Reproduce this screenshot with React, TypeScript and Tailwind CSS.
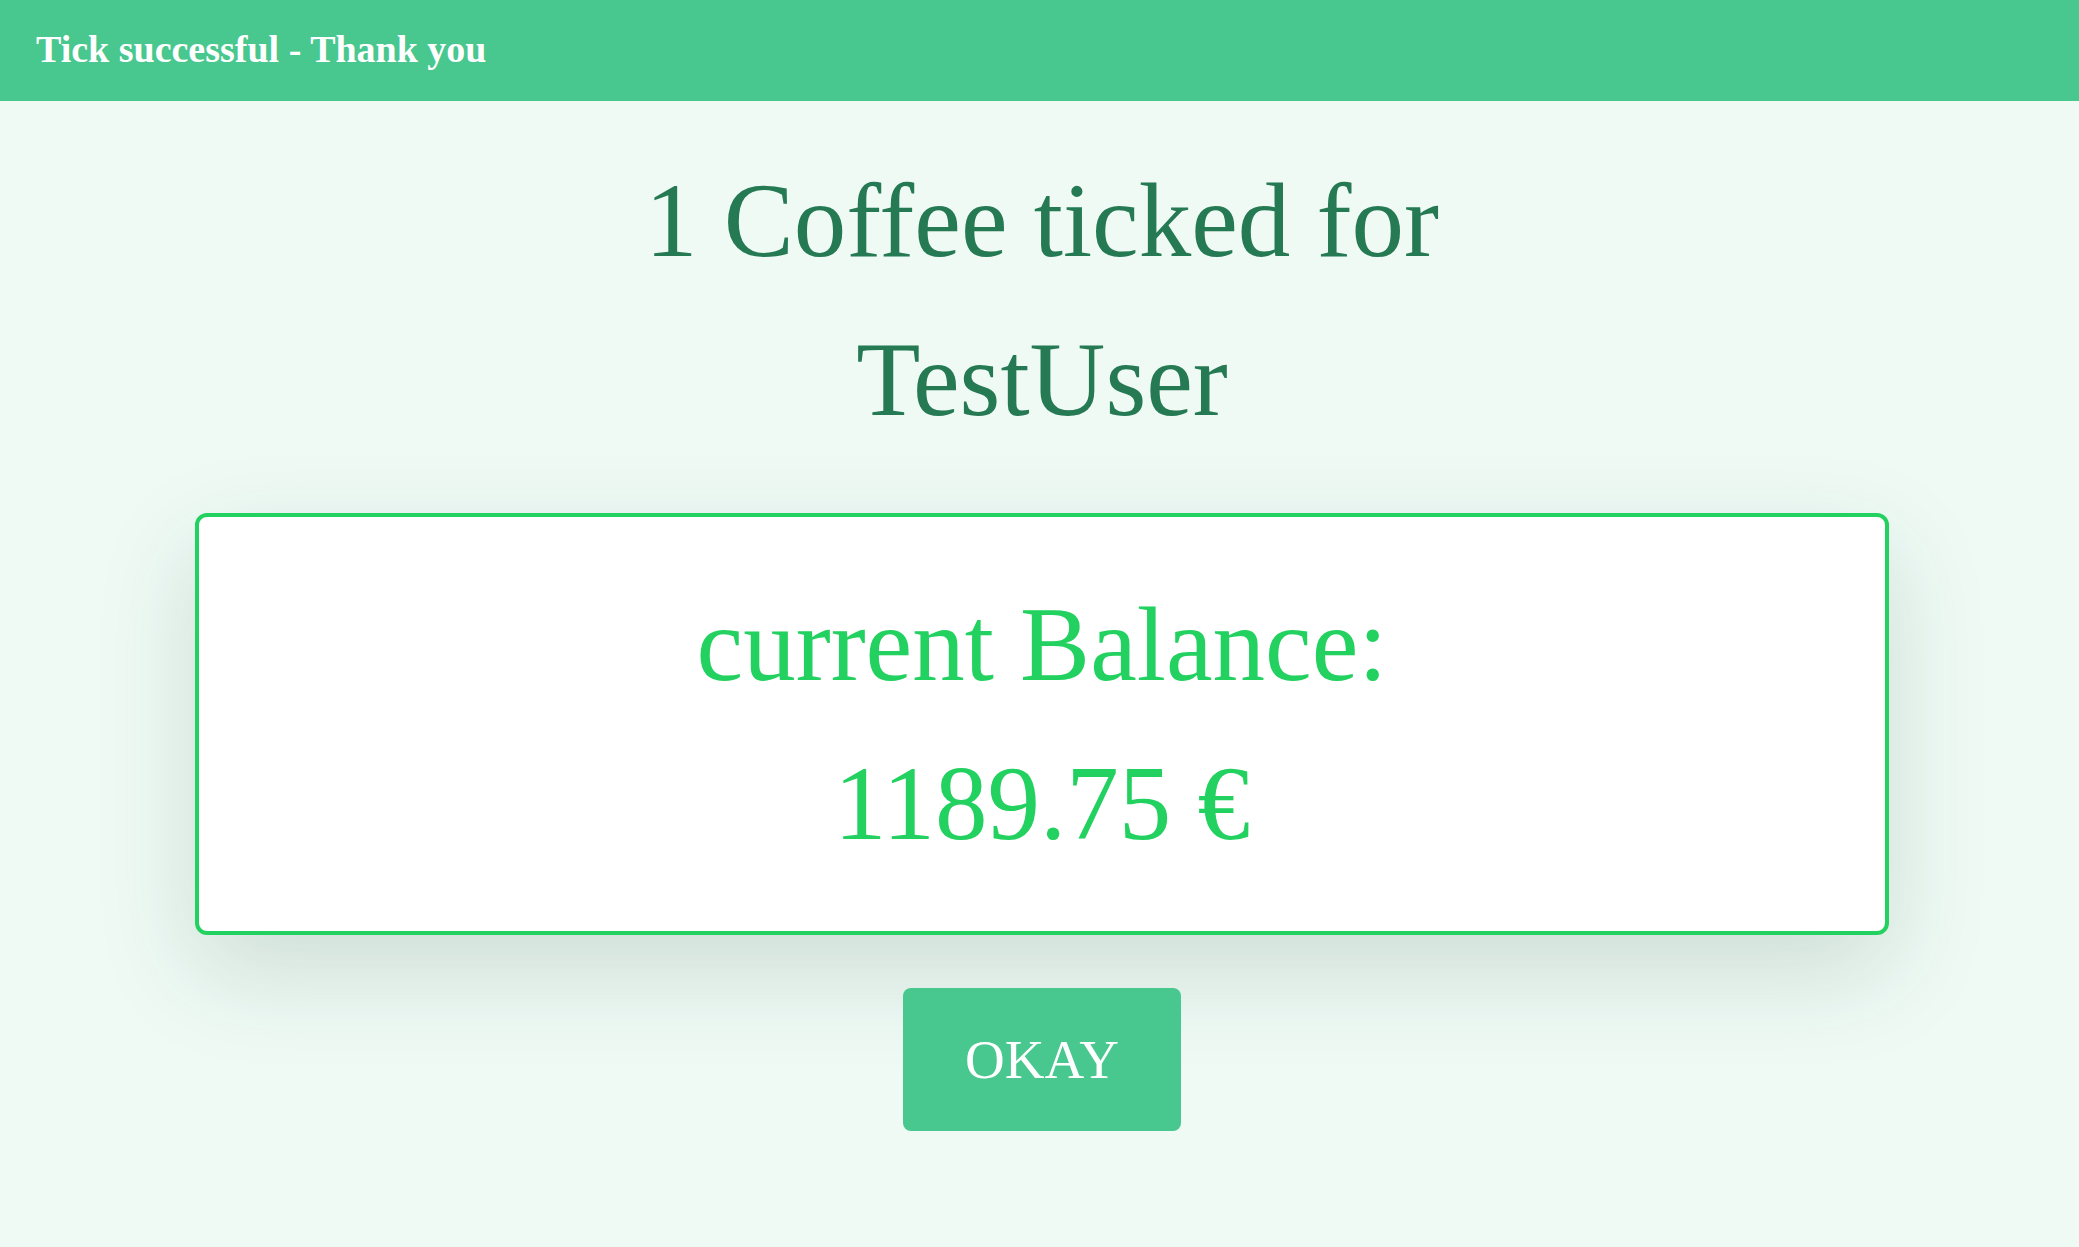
export default function App() {
  return (
    <div className="min-h-screen bg-[#effaf5] font-['Liberation_Serif','Times_New_Roman',serif]">
      <header className="h-[101px] bg-[#48c78e] flex items-center pl-[36px] pb-[3px]">
        <h1 className="text-white font-bold text-[38px] leading-none">Tick successful - Thank you</h1>
      </header>

      <main className="flex flex-col items-center pl-[5px] pt-[40px]">
        <h2 className="text-[#257953] text-[105px] leading-[159px] text-center">
          1 Coffee ticked for
          <br />
          TestUser
        </h2>

        <div className="mt-[54px] w-[1694px] bg-white border-4 border-[#22d15f] rounded-[12px] py-[48px] text-center shadow-[0_36px_100px_rgba(20,60,40,0.15)]">
          <p className="text-[#22d15f] text-[105px] leading-[159px]">current Balance:</p>
          <p className="text-[#22d15f] text-[105px] leading-[159px]">1189.75 €</p>
        </div>

        <button className="mt-[53px] w-[278px] h-[143px] bg-[#48c78e] rounded-[8px] text-white text-[55px] leading-none">
          OKAY
        </button>
      </main>
    </div>
  );
}
